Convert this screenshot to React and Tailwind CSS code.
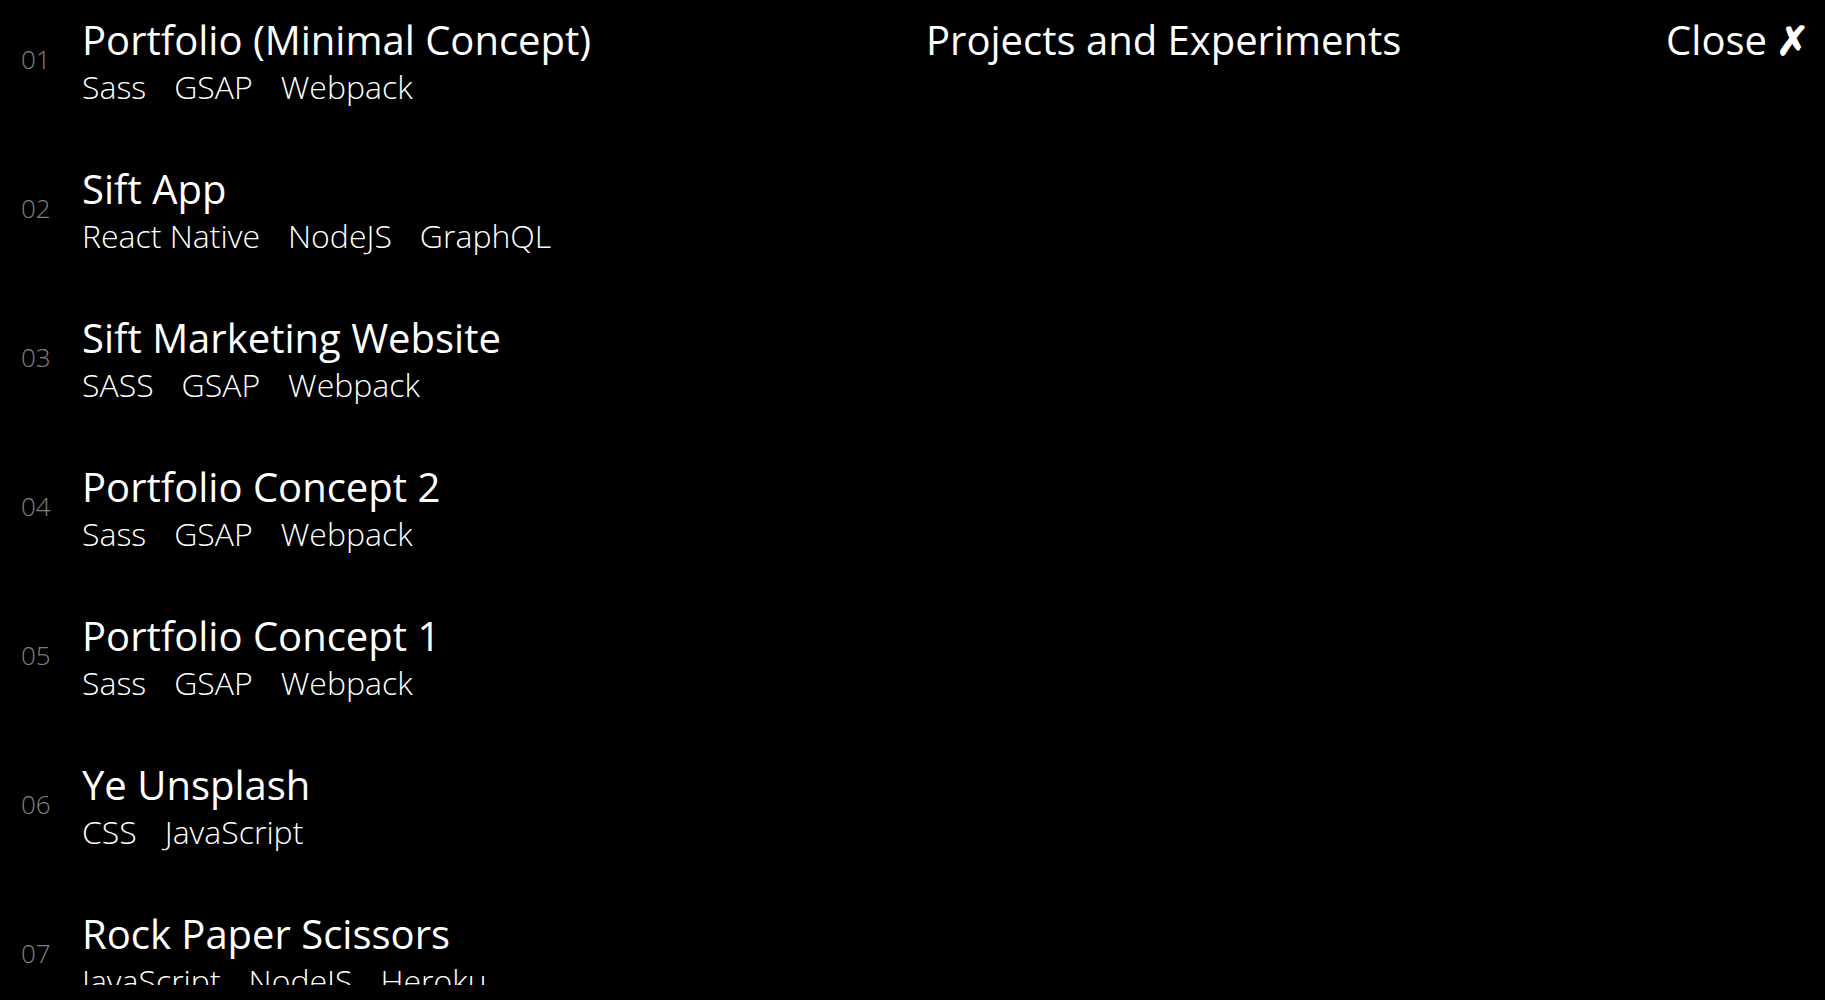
import React from 'react';

const projects = [
  { title: 'Portfolio (Minimal Concept)', tags: ['Sass', 'GSAP', 'Webpack'] },
  { title: 'Sift App', tags: ['React Native', 'NodeJS', 'GraphQL'] },
  { title: 'Sift Marketing Website', tags: ['SASS', 'GSAP', 'Webpack'] },
  { title: 'Portfolio Concept 2', tags: ['Sass', 'GSAP', 'Webpack'] },
  { title: 'Portfolio Concept 1', tags: ['Sass', 'GSAP', 'Webpack'] },
  { title: 'Ye Unsplash', tags: ['CSS', 'JavaScript'] },
  { title: 'Rock Paper Scissors', tags: ['JavaScript', 'NodeJS', 'Heroku'] },
  { title: 'Weather App', tags: ['React', 'API'] },
];

const ProjectRow = ({ index, project }) => (
  <div className="flex items-center pt-[18px] pb-[42px] shrink-0">
    <span className="w-[61px] pb-[8px] text-[26px] leading-[32px] text-[#808080] font-light">
      {String(index + 1).padStart(2, '0')}
    </span>
    <div className="flex flex-col gap-[5px]">
      <h2 className="text-[40px] leading-[44px] text-white font-normal">{project.title}</h2>
      <div className="flex gap-[28px] text-[32px] leading-[40px] text-white font-light">
        {project.tags.map((tag) => (
          <span key={tag}>{tag}</span>
        ))}
      </div>
    </div>
  </div>
);

export default function App() {
  return (
    <div className="w-full h-[1000px] bg-black flex font-['Open_Sans',sans-serif] overflow-hidden">
      <div className="w-[926px] h-[985px] overflow-hidden pl-[21px] flex flex-col">
        {projects.map((p, i) => (
          <ProjectRow key={p.title} index={i} project={p} />
        ))}
      </div>
      <div className="flex-1 flex justify-between items-start pt-[18px] pr-[15px] text-white text-[40px] leading-[44px]">
        <span>Projects and Experiments</span>
        <button className="flex items-center gap-[9px] text-white">
          Close <span className="font-bold">✗</span>
        </button>
      </div>
    </div>
  );
}
